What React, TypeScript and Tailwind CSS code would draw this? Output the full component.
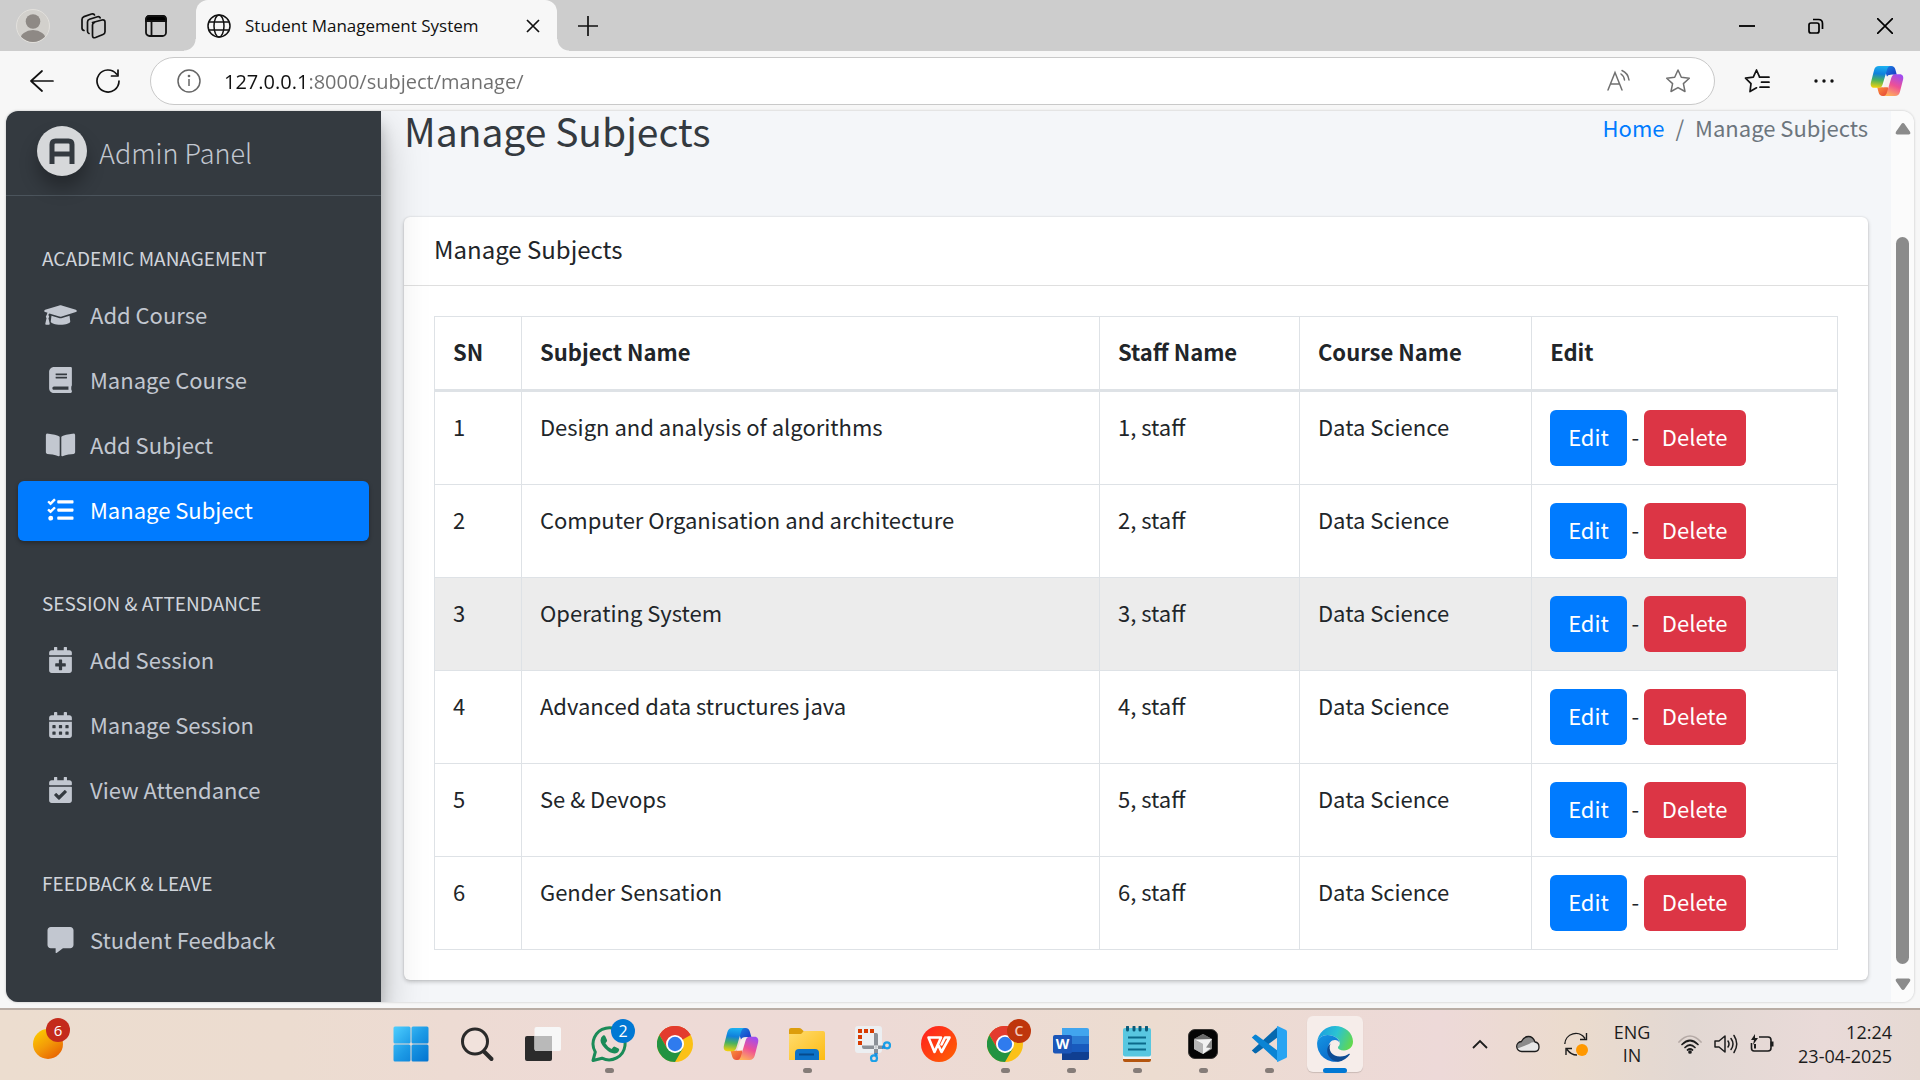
import React from "react";
import {
  FaBook,
  FaBookOpen,
  FaCalendarAlt,
  FaCalendarCheck,
  FaCalendarPlus,
  FaCommentAlt,
  FaGraduationCap,
  FaTasks,
} from "react-icons/fa";

type IconType = React.ComponentType<{ className?: string }>;

const navGroups: { title: string; items: { label: string; icon: IconType; active?: boolean }[] }[] = [
  {
    title: "ACADEMIC MANAGEMENT",
    items: [
      { label: "Add Course", icon: FaGraduationCap },
      { label: "Manage Course", icon: FaBook },
      { label: "Add Subject", icon: FaBookOpen },
      { label: "Manage Subject", icon: FaTasks, active: true },
    ],
  },
  {
    title: "SESSION & ATTENDANCE",
    items: [
      { label: "Add Session", icon: FaCalendarPlus },
      { label: "Manage Session", icon: FaCalendarAlt },
      { label: "View Attendance", icon: FaCalendarCheck },
    ],
  },
  {
    title: "FEEDBACK & LEAVE",
    items: [{ label: "Student Feedback", icon: FaCommentAlt }],
  },
];

const subjects = [
  "Design and analysis of algorithms",
  "Computer Organisation and architecture",
  "Operating System",
  "Advanced data structures java",
  "Se & Devops",
  "Gender Sensation",
];

function CopilotIcon({ id, className }: { id: string; className: string }) {
  return (
    <svg viewBox="0 0 36 34" className={className} aria-hidden="true">
      <defs>
        <linearGradient id={id + "a"} x1="0.4" y1="0" x2="0.3" y2="1">
          <stop offset="0" stopColor="#1cb0f0" />
          <stop offset="0.35" stopColor="#1080dc" />
          <stop offset="0.65" stopColor="#4cb25c" />
          <stop offset="1" stopColor="#f5d20a" />
        </linearGradient>
        <linearGradient id={id + "b"} x1="0.7" y1="0" x2="0.3" y2="1">
          <stop offset="0" stopColor="#a04cf0" />
          <stop offset="0.5" stopColor="#ee5096" />
          <stop offset="1" stopColor="#ffb25a" />
        </linearGradient>
        <linearGradient id={id + "c"} x1="0" y1="0" x2="1" y2="1">
          <stop offset="0" stopColor="#1a8ce6" />
          <stop offset="1" stopColor="#1b2fc0" />
        </linearGradient>
        <linearGradient id={id + "d"} x1="0" y1="0" x2="1" y2="1">
          <stop offset="0" stopColor="#ff9a3a" />
          <stop offset="1" stopColor="#e23a3a" />
        </linearGradient>
      </defs>
      <path d="M14 1h8.500c2.400 0 3.800 1.600 4.400 3.700l1.500 5.600h-5.200c-2.400 0-3.900.7-5 2.700z" fill={"url(#" + id + "c)"} />
      <path d="M22 33h-8.500c-2.400 0-3.800-1.600-4.400-3.700L7.600 23.700h5.200c2.400 0 3.900-.7 5-2.700z" fill={"url(#" + id + "d)"} />
      <path d="M9.500 1H22c-2.200 0-3.200 1.400-3.900 3.700l-4.600 15.500C12.700 23 11.500 24.300 9 24.300H4.500C1.200 24.300.2 21.700.9 18.600L4.300 5.200C5 2.600 6.700 1 9.500 1z" fill={"url(#" + id + "a)"} />
      <path d="M17.800 13c.8-2 2.200-2.700 4.200-2.700h3L21 21c-1 2-2 2.700-4 2.700h-3z" fill="#f7efee" />
      <path d="M26.500 33H14c2.200 0 3.200-1.400 3.900-3.700l4.600-15.500c.8-2.800 2-4.100 4.500-4.100h4.500c3.300 0 4.300 2.600 3.600 5.700l-3.400 13.400c-.7 2.600-2.400 4.200-5.200 4.200z" fill={"url(#" + id + "b)"} />
    </svg>
  );
}

function ChromeIcon() {
  return (
    <svg viewBox="0 0 36 36" className="size-9" aria-hidden="true">
      <circle cx="18" cy="18" r="18" fill="#fbc116" />
      <path d="M18 18 2.400 9A18 18 0 0 1 33.600 9z" fill="#e33b2e" />
      <path d="M18 9h15.600A18 18 0 0 0 2.400 9l7.800 13.500z" fill="#e33b2e" />
      <path d="M2.400 9A18 18 0 0 0 18 36l7.800-13.500L18 27l-7.800-4.500z" fill="#229342" />
      <circle cx="18" cy="18" r="9" fill="#fff" />
      <circle cx="18" cy="18" r="7.200" fill="#2f7bee" />
    </svg>
  );
}

function TabStrip() {
  return (
    <header className="flex h-[51px] items-center bg-[#cdcdcd] text-[#111]">
      <button aria-label="Profile" className="ml-4 flex size-[34px] shrink-0 items-center justify-center">
        <svg viewBox="0 0 34 34" className="size-[34px]">
          <defs>
            <clipPath id="avatar"><circle cx="17" cy="17" r="16" /></clipPath>
          </defs>
          <circle cx="17" cy="17" r="16.500" fill="#d2d0cc" stroke="#e2e0dc" />
          <g clipPath="url(#avatar)" fill="#8e8985">
            <circle cx="17" cy="12.500" r="7.300" />
            <ellipse cx="17" cy="31" rx="13" ry="10" />
          </g>
        </svg>
      </button>
      <button aria-label="Workspaces" className="ml-7 size-[30px] shrink-0">
        <svg viewBox="0 0 30 30" className="size-[30px]" fill="none" stroke="#111" strokeWidth="1.700" strokeLinejoin="round" strokeLinecap="round">
          <path d="M14.500 11.500 24 9q3-.6 3 2.200v9.600q0 2-2 2.700l-7.500 3q-3 1-3-2V14q0-2 2-2.600z" />
          <path d="M11 22.500q-1.500-.4-1.500-2.500v-9q0-2 2-2.700l8-2.500q2-.5 2.700 1" />
          <path d="M6 19.500q-2-.4-2-2.500V8.500Q4 6.300 6 5.600L13.500 3q2.500-.7 3 1" />
        </svg>
      </button>
      <button aria-label="Tab actions" className="ml-9 size-6 shrink-0">
        <svg viewBox="0 0 24 24" className="size-6" fill="none" stroke="#111" strokeWidth="1.800">
          <rect x="2" y="2" width="20" height="20" rx="3.500" />
          <path d="M2 7V5.500Q2 2 5.500 2h13Q22 2 22 5.500V7z" fill="#000" />
          <path d="M7.500 7v15" />
        </svg>
      </button>
      <div className="relative ml-7 flex h-full w-[361px] shrink-0 items-center rounded-t-xl bg-[#f7f7f7] pl-[11px]">
        <span className="absolute bottom-0 -left-3 size-3 bg-[radial-gradient(circle_at_0_0,transparent_11px,#f7f7f7_12px)]" />
        <span className="absolute -right-3 bottom-0 size-3 bg-[radial-gradient(circle_at_100%_0,transparent_11px,#f7f7f7_12px)]" />
        <svg viewBox="0 0 24 24" className="size-6 shrink-0" fill="none" stroke="#111" strokeWidth="1.500" aria-hidden="true">
          <circle cx="12" cy="12" r="11" />
          <ellipse cx="12" cy="12" rx="5" ry="11" />
          <path d="M2 8h20M2 16h20" />
        </svg>
        <span className="ml-[14px] flex-1 text-[17px] leading-6 whitespace-nowrap">Student Management System</span>
        <button aria-label="Close tab" className="mr-4 size-4">
          <svg viewBox="0 0 16 16" className="size-4" stroke="#111" strokeWidth="1.700"><path d="m2 2 12 12M14 2 2 14" /></svg>
        </button>
      </div>
      <button aria-label="New tab" className="ml-5 size-[22px] shrink-0">
        <svg viewBox="0 0 22 22" className="size-[22px]" stroke="#111" strokeWidth="1.700"><path d="M11 1v20M1 11h20" /></svg>
      </button>
      <div className="ml-auto flex items-center gap-[53px] pr-[27px]">
        <button aria-label="Minimize" className="size-4">
          <svg viewBox="0 0 16 16" className="size-4" stroke="#000" strokeWidth="1.800"><path d="M0 8h16" /></svg>
        </button>
        <button aria-label="Restore" className="size-4">
          <svg viewBox="0 0 16 16" className="size-4" fill="none" stroke="#000" strokeWidth="1.700">
            <rect x="1" y="5" width="10" height="10" rx="2" />
            <path d="M5 1.500h5.500Q14.500 1.500 14.500 5.500V11" />
          </svg>
        </button>
        <button aria-label="Close" className="size-4">
          <svg viewBox="0 0 16 16" className="size-4" stroke="#000" strokeWidth="1.700"><path d="m0 0 16 16M16 0 0 16" /></svg>
        </button>
      </div>
    </header>
  );
}

function Toolbar() {
  return (
    <div className="flex h-[60px] items-center bg-[#f7f7f7]">
      <button aria-label="Back" className="ml-[30px] size-6 shrink-0">
        <svg viewBox="0 0 24 24" className="size-6" fill="none" stroke="#111" strokeWidth="1.700" strokeLinecap="round" strokeLinejoin="round"><path d="M23 12H1M12 2 1 12l11 10" /></svg>
      </button>
      <button aria-label="Refresh" className="ml-[42px] size-6 shrink-0">
        <svg viewBox="0 0 24 24" className="size-6" fill="none" stroke="#111" strokeWidth="1.700" strokeLinecap="round" strokeLinejoin="round"><path d="M23 12A11 11 0 1 1 20.500 5M22 1v6h-6.500" /></svg>
      </button>
      <div className="ml-[30px] flex h-12 flex-1 items-center rounded-full border border-[#c9c9c9] bg-white pl-[26px] pr-[23px]">
        <button aria-label="Site information" className="size-6 shrink-0">
          <svg viewBox="0 0 24 24" className="size-6" fill="none" stroke="#666" strokeWidth="1.500"><circle cx="12" cy="12" r="11" /><path d="M12 10v7" /><circle cx="12" cy="7" r=".6" fill="#666" /></svg>
        </button>
        <input
          aria-label="Address"
          type="text"
          defaultValue="127.0.0.1:8000/subject/manage/"
          className="ml-[23px] h-8 flex-1 bg-[linear-gradient(90deg,#111_81px,#6f6f6f_81px)] bg-clip-text text-[20px] text-transparent outline-none"
        />
        <button aria-label="Read aloud" className="size-6">
          <svg viewBox="0 0 24 24" className="size-6" fill="none" stroke="#707070" strokeWidth="1.500" strokeLinecap="round"><path d="m1 21 7-17.500L15 21M3.500 15h9M14 5q3 2 3.500 6M15 1.500q6 2.500 7 9.500" /></svg>
        </button>
        <button aria-label="Add to favorites" className="ml-[34px] size-[26px]">
          <svg viewBox="0 0 26 26" className="size-[26px]" fill="none" stroke="#707070" strokeWidth="1.500" strokeLinejoin="round"><path d="m13 2 3.300 7.200 8 1-5.900 5.400 1.600 7.900-7-3.900-7 3.900 1.600-7.900-5.900-5.400 8-1z" /></svg>
        </button>
      </div>
      <button aria-label="Favorites" className="ml-[29px] size-[26px]">
        <svg viewBox="0 0 26 26" className="size-[26px]" fill="none" stroke="#111" strokeWidth="1.700" strokeLinejoin="round" strokeLinecap="round"><path d="M17 9.200h-1.400L12.500 2 9.300 9.200l-7.800 1L7 15.600l-1 8 6.500-3.800M15.500 9.200H25M17.500 14.200H25M16 19.200h9" /></svg>
      </button>
      <button aria-label="Settings and more" className="ml-[42px] size-6">
        <svg viewBox="0 0 24 24" className="size-6" fill="#111"><circle cx="4" cy="12" r="1.700" /><circle cx="12" cy="12" r="1.700" /><circle cx="20" cy="12" r="1.700" /></svg>
      </button>
      <button aria-label="Copilot" className="mr-4 ml-[34px]">
        <CopilotIcon id="toolbar" className="h-8 w-[34px]" />
      </button>
    </div>
  );
}

function Sidebar() {
  return (
    <aside className="z-10 w-[375px] shrink-0 bg-[#343a40] text-[#c2c7d0] shadow-[0_20px_42px_rgba(0,0,0,0.25),0_14px_14px_rgba(0,0,0,0.22)]">
      <a href="#home" className="flex h-[85px] items-center border-b border-[#4b545c] pb-1 pl-[31px]">
        <span className="flex size-[50px] items-center justify-center rounded-full bg-[#d6d8da] shadow-[0_12px_18px_rgba(0,0,0,0.3)]">
          <svg viewBox="0 0 26 26" className="size-[26px]" fill="none" stroke="#343a40" strokeWidth="5" aria-hidden="true">
            <path d="M3 26V6.500Q3 3 6.500 3h13Q23 3 23 6.500V26M3 16h20" />
          </svg>
        </span>
        <span className="ml-3 pt-1 text-[27px] leading-9 font-light">Admin Panel</span>
      </a>
      <nav className="px-3 pt-[5px]">
        {navGroups.map((group) => (
          <section key={group.title}>
            <h2 className="px-6 pt-[41px] pb-3 text-[19px] leading-8 text-[#d0d4db]">{group.title}</h2>
            <ul>
              {group.items.map(({ label, icon: Icon, active }) => (
                <li key={label} className="mb-[5px]">
                  <a
                    href="#nav"
                    className={
                      active
                        ? "flex h-[60px] items-center gap-[13px] rounded-md bg-[#007bff] pb-[3px] pl-[26px] text-[22px] text-white shadow-[0_2px_4px_rgba(0,0,0,0.3)]"
                        : "flex h-[60px] items-center gap-[13px] rounded-md pb-[3px] pl-[26px] text-[22px]"
                    }
                  >
                    <Icon className="h-[26px] w-[33px] shrink-0" />
                    <span>{label}</span>
                  </a>
                </li>
              ))}
            </ul>
          </section>
        ))}
      </nav>
    </aside>
  );
}

const th = "border border-b-[3px] border-[#dee2e6] px-[18px] pt-4 pb-5 text-left leading-9 font-bold";
const td = "border border-[#dee2e6] px-[18px] pt-4 align-top leading-9";

function SubjectsTable() {
  return (
    <table className="w-full table-fixed border-collapse text-[22px]">
      <colgroup>
        <col className="w-[6.200%]" />
        <col className="w-[41.200%]" />
        <col className="w-[14.250%]" />
        <col className="w-[16.550%]" />
        <col className="w-[21.800%]" />
      </colgroup>
      <thead>
        <tr>
          <th className={th}>SN</th>
          <th className={th}>Subject Name</th>
          <th className={th}>Staff Name</th>
          <th className={th}>Course Name</th>
          <th className={th}>Edit</th>
        </tr>
      </thead>
      <tbody>
        {subjects.map((name, i) => (
          <tr key={name} className={i === 2 ? "bg-[#ececec]" : ""}>
            <td className={td}>{i + 1}</td>
            <td className={td}>{name}</td>
            <td className={td}>{i + 1}, staff</td>
            <td className={td}>Data Science</td>
            <td className="border border-[#dee2e6] px-[18px] py-[18px] leading-9">
              <div className="flex items-center">
                <a href="#edit" className="flex h-14 items-center rounded-md bg-[#007bff] px-[18px] pb-1 text-white">Edit</a>
                <span className="w-[17px] pb-1 text-center">-</span>
                <a href="#delete" className="flex h-14 items-center rounded-md bg-[#dc3545] px-[18px] pb-1 text-white">Delete</a>
              </div>
            </td>
          </tr>
        ))}
      </tbody>
    </table>
  );
}

function PageViewport() {
  return (
    <div className="mx-[6px] flex h-[891px] overflow-hidden rounded-xl bg-[#f4f6f9] font-['Noto_Sans_CJK_SC',sans-serif] text-[#212529] shadow-[0_0_2px_1px_rgba(0,0,0,0.1)]">
      <Sidebar />
      <main className="min-w-0 flex-1 pr-[23px] pl-[23px]">
        <div className="flex h-[106px] items-start justify-between">
          <h1 className="text-[39px] leading-[38px] text-[#343a40]">Manage Subjects</h1>
          <nav aria-label="Breadcrumb" className="flex text-[22px] leading-8 text-[#6c757d]">
            <a href="#home" className="text-[#007bff]">Home</a>
            <span className="px-[11px]">/</span>
            <span>Manage Subjects</span>
          </nav>
        </div>
        <section className="rounded-md bg-white shadow-[0_0_2px_rgba(0,0,0,0.13),0_2px_4px_rgba(0,0,0,0.2)]">
          <h2 className="border-b border-[#dfdfdf] px-[30px] pt-[14px] pb-[18px] text-[24px] leading-9">Manage Subjects</h2>
          <div className="px-[30px] py-[30px]">
            <SubjectsTable />
          </div>
        </section>
      </main>
      <div className="flex w-[23px] shrink-0 flex-col items-center bg-[#fbfbfb] pt-3 pb-3" aria-hidden="true">
        <svg viewBox="0 0 16 12" className="h-3 w-4" fill="#8b8b8b"><path d="M8 0q1 0 1.600.9L15.200 9q.8 2-1.200 2.500H2Q0 11 .8 9L6.400.9Q7 0 8 0z" /></svg>
        <div className="mt-[102px] w-[13px] flex-1 rounded-full bg-[#8b8b8b]" />
        <svg viewBox="0 0 16 12" className="mt-[14px] h-3 w-4" fill="#8b8b8b"><path d="M8 12q-1 0-1.600-.9L.8 3Q0 1 2 .5h12q2 .5 1.200 2.500l-5.600 8.100Q9 12 8 12z" /></svg>
      </div>
    </div>
  );
}

const apps: { name: string; state?: "open" | "active"; badge?: string; art: React.ReactNode }[] = [
  {
    name: "Start",
    art: (
      <svg viewBox="0 0 36 36" className="size-9">
        <defs><linearGradient id="win" gradientUnits="userSpaceOnUse" x1="0" y1="0" x2="36" y2="36"><stop offset="0" stopColor="#4fd0ff" /><stop offset="0.5" stopColor="#1d9be6" /><stop offset="1" stopColor="#0272cf" /></linearGradient></defs>
        <g fill="url(#win)"><rect x=".5" y=".5" width="17" height="17" rx="1.500" /><rect x="18.500" y=".5" width="17" height="17" rx="1.500" /><rect x=".5" y="18.500" width="17" height="17" rx="1.500" /><rect x="18.500" y="18.500" width="17" height="17" rx="1.500" /></g>
      </svg>
    ),
  },
  {
    name: "Search",
    art: (
      <svg viewBox="0 0 36 36" className="size-9" fill="none" stroke="#2a2a2a" strokeLinecap="round"><circle cx="16" cy="15.500" r="12.500" strokeWidth="3" fill="#f1e2dc" /><path d="m25.500 26 7 7" strokeWidth="4" /></svg>
    ),
  },
  {
    name: "Task view",
    art: (
      <svg viewBox="0 0 36 36" className="size-9"><rect x="0" y="10" width="27" height="25" rx="2" fill="#2b2b2b" /><rect x="9.500" y="1" width="26.500" height="24" rx="2" fill="#f7f7f7" /><path d="M9.500 10H27v15H11.500q-2 0-2-2z" fill="#b9b9b9" /></svg>
    ),
  },
  {
    name: "WhatsApp",
    state: "open",
    badge: "2",
    art: (
      <svg viewBox="0 0 36 36" className="size-9"><path d="M2 34.500 4.300 26A16 16 0 1 1 11 32.200z" fill="none" stroke="#1a8b58" strokeWidth="3" strokeLinejoin="round" /><path d="M12 9.500q1.700-.5 2.300.7l1.700 3.700q.4 1-.4 1.900l-1.200 1.500q2.200 4 6.200 5.700l1.700-2q.7-.8 1.600-.3l3.600 1.800q1 .5.600 1.800-1.200 3.300-4.700 3.300-4.500-.2-9.300-5-4.500-4.700-4.600-8.400.1-3.200 2.500-4.700z" fill="#1a8b58" /></svg>
    ),
  },
  { name: "Chrome", art: <ChromeIcon /> },
  { name: "Copilot", art: <CopilotIcon id="task" className="h-[34px] w-9" /> },
  {
    name: "File Explorer",
    state: "open",
    art: (
      <svg viewBox="0 0 36 36" className="size-9"><defs><linearGradient id="fold" x1="0" y1="0" x2="1" y2="1"><stop offset="0" stopColor="#ffdc70" /><stop offset="1" stopColor="#fdbb12" /></linearGradient></defs><path d="M0 4q0-2 2-2h8q1.500 0 2.500 1L15 5.500V9H0z" fill="#dd9d0c" /><path d="M0 8h12l3-3h19q2 0 2 2v27H0z" fill="url(#fold)" /><path d="M6 34v-7q0-4 4-4h16q4 0 4 4v7z" fill="#0c72c8" /><path d="M10 28.500h15" stroke="#064a8c" strokeWidth="2" /></svg>
    ),
  },
  {
    name: "Snipping Tool",
    art: (
      <svg viewBox="0 0 36 36" className="size-9">
        <rect width="27" height="27" rx="3" fill="#eceff2" />
        <path d="M3 3h4v4H3zM9 3h4v4H9zM15 3h4v4h-4zM3 9h4v4H3zM3 15h4v4H3z" fill="#d83b01" />
        <path d="M7 19.500V21q0 2 2 2h19v-3.500zM19 7h2.500q1.500 0 1.500 2v19h-4z" fill="#8b9198" />
        <circle cx="21" cy="21.200" r="1.500" fill="#c8ccd0" />
        <circle cx="32" cy="19.300" r="3" fill="none" stroke="#1aa0e8" strokeWidth="2.200" />
        <circle cx="19" cy="32.300" r="3" fill="none" stroke="#1aa0e8" strokeWidth="2.200" />
        <path d="M27 21.200h3M21 27v3" stroke="#1a8fe0" strokeWidth="3" />
      </svg>
    ),
  },
  {
    name: "WPS Office",
    art: (
      <svg viewBox="0 0 36 36" className="size-9"><defs><linearGradient id="wps" x1="0" y1="0" x2="1" y2="1"><stop offset="0" stopColor="#ff1d22" /><stop offset="1" stopColor="#ff6300" /></linearGradient></defs><circle cx="18" cy="18" r="18" fill="url(#wps)" /><path d="M7.500 11.500h12.500l-6.500 14.500zM17 18.500l3.500 7.500 8-14.500h-4.500l-3.500 7" fill="none" stroke="#fff" strokeWidth="2.600" strokeLinejoin="round" strokeLinecap="round" /></svg>
    ),
  },
  { name: "Chrome profile", state: "open", badge: "C", art: <ChromeIcon /> },
  {
    name: "Word",
    state: "open",
    art: (
      <svg viewBox="0 0 36 36" className="size-9"><path d="M9 2h25q2 0 2 2v6H9z" fill="#41a5ee" /><path d="M9 10h27v8.500H9z" fill="#2b7cd3" /><path d="M9 18h27v8.500H9z" fill="#185abd" /><path d="M9 26h27v6q0 2-2 2H9z" fill="#103f91" /><rect y="9" width="19" height="18.500" rx="2" fill="#1b56b8" /><text x="9.500" y="23" fontSize="14" fontWeight="700" fontFamily="Open Sans" textAnchor="middle" fill="#fff">W</text></svg>
    ),
  },
  {
    name: "Notepad",
    state: "open",
    art: (
      <svg viewBox="0 0 36 36" className="size-9"><path d="M4 32h28v2q0 2-2 2H6q-2 0-2-2z" fill="#b5560f" /><rect x="4" y="20" width="28" height="13" fill="#f4f4f4" /><rect x="4" y="2" width="28" height="28.500" rx="2" fill="#58c7e0" /><path d="M9 11.500h18M9 17.500h18M9 23.500h18" stroke="#0b6a8a" strokeWidth="2" /><path d="M8.500 1v3M15 1v3M21 1v3M27.500 1v3" stroke="#0b5a78" strokeWidth="3" strokeLinecap="round" /></svg>
    ),
  },
  {
    name: "Cursor",
    state: "open",
    art: (
      <svg viewBox="0 0 36 36" className="size-9">
        <rect x="3.500" y="3.500" width="29" height="29" rx="6.500" fill="#050505" stroke="#3a3735" />
        <path d="m18 8 9 5v10l-9 5-9-5V13z" fill="#8a8a8a" />
        <path d="m9 13 9-5 9 5-9 2z" fill="#6a6a6a" />
        <path d="M9 13.500 18 18v10l-9-5z" fill="#b5b5b5" />
        <path d="M9.500 13.500 27 13l-6 8.500 5 .5-8 6V18z" fill="#f2f2f2" />
      </svg>
    ),
  },
  {
    name: "Visual Studio Code",
    state: "open",
    art: (
      <svg viewBox="0 0 36 36" className="size-9"><path d="m.8 24.500 2.700 2.500q1 .8 2 0L27 11V.5z" fill="#0668ae" /><path d="M.8 11.500 3.500 9q1-.8 2 0L27 25v10.500z" fill="#0a84d4" /><path d="M26.500 0 35 4q1 .5 1 1.500v25q0 1-1 1.500l-8.500 4q-.5-.2-.5-1V1q0-.8.5-1z" fill="#28a4f2" /></svg>
    ),
  },
  {
    name: "Microsoft Edge",
    state: "active",
    art: (
      <svg viewBox="0 0 36 36" className="size-9">
        <defs>
          <linearGradient id="edgeTop" x1="0" y1="0.3" x2="1" y2="0.6"><stop offset="0" stopColor="#1b9de2" /><stop offset="0.5" stopColor="#2bc3d2" /><stop offset="1" stopColor="#62d84e" /></linearGradient>
          <linearGradient id="edgeLow" x1="0" y1="0" x2="0.6" y2="1"><stop offset="0" stopColor="#1596e4" /><stop offset="1" stopColor="#0a68c8" /></linearGradient>
        </defs>
        <path d="M.2 16A18 18 0 0 1 18 0c10 0 18 7 18 15.500 0 5.500-4 9-9 9-4 0-6-1.400-6-3 0-1.200 1.800-1.500 1.800-4.500C22.800 13 17 9 10.500 9 5 9 1.500 12 .2 16z" fill="url(#edgeTop)" />
        <path d="M.2 16C1.500 12 5 9 10.500 9c6.500 0 12 4 12 8-.5-2-2.500-3-4.500-3-4 0-6.500 3.500-6.500 8 0 6.500 5 12 12 13A18 18 0 0 1 .2 16z" fill="url(#edgeLow)" />
        <path d="M13.500 17.500c-3 7 2 13 9.500 13 4 0 7-1.300 9-2.700q1-.5.800.6A18 18 0 0 1 21 35.700C14 35 9.500 29 10.300 23q.7-3.700 3.200-5.500z" fill="#0d4b94" />
      </svg>
    ),
  },
];

function Taskbar() {
  return (
    <footer className="flex h-[72px] items-center border-t-2 border-[#b9ada5] bg-[linear-gradient(90deg,#ecddcf_0%,#ecdcd0_15%,#eedad6_32%,#eddad6_45%,#ecdcd0_60%,#edd9d8_75%,#ebdbcd_82%,#e2d8d3_88%,#e9dad8_95%,#e6d9d3_100%)] pb-0.5 font-['Open_Sans',sans-serif] text-[#1c1c1c]">
      <button aria-label="Widgets" className="relative ml-[33px] size-[30px] shrink-0 rounded-full bg-[linear-gradient(145deg,#fcc800_10%,#f39a08_50%,#e65a00_95%)]">
        <span className="absolute -top-[11px] left-[13px] flex size-6 items-center justify-center rounded-full bg-[#c42b1c] text-[15px] leading-none text-white">6</span>
      </button>
      <div className="ml-80 flex gap-[10px]">
        {apps.map((app) => (
          <button
            key={app.name}
            aria-label={app.name}
            className={
              app.state === "active"
                ? "relative flex size-14 items-center justify-center rounded-md bg-[#f6edea] shadow-[0_1px_1px_rgba(0,0,0,0.15)]"
                : "relative flex size-14 items-center justify-center rounded-md"
            }
          >
            {app.art}
            {app.badge === "2" && (
              <span className="absolute top-[3px] right-0.5 flex size-6 items-center justify-center rounded-full bg-[#0078d4] text-[16px] leading-none text-white">2</span>
            )}
            {app.badge === "C" && (
              <span className="absolute top-[3px] right-0.5 flex size-6 items-center justify-center rounded-full bg-[#bf360c] text-[14px] leading-none font-semibold text-[#f3c9bb]">C</span>
            )}
            {app.state === "open" && <span className="absolute -bottom-px h-[5px] w-[9px] rounded-full bg-[#857c78]" />}
            {app.state === "active" && <span className="absolute -bottom-px h-[5px] w-6 rounded-full bg-[#0078d4]" />}
          </button>
        ))}
      </div>
      <div className="ml-auto flex items-center pr-7">
        <button aria-label="Show hidden icons" className="size-4">
          <svg viewBox="0 0 16 16" className="size-4" fill="none" stroke="#1c1c1c" strokeWidth="1.800"><path d="m1 12 7-7 7 7" /></svg>
        </button>
        <button aria-label="OneDrive" className="ml-7 w-6">
          <svg viewBox="0 0 24 18" className="h-[18px] w-6"><path d="M6 16.500a5 5 0 0 1-.6-10Q8 1.500 12.500 1.500T19 7q4 .6 4 4.900t-4 4.600z" fill="#e8e8e8" /><path d="M1.500 13.500Q0 7.500 5.400 6.500 8 1.500 12.500 1.500T19 7q-4 0-6 2z" fill="#8b8b8b" /><path d="M6 16.500a5 5 0 0 1-.6-10Q8 1.500 12.500 1.500T19 7q4 .6 4 4.900t-4 4.600z" fill="none" stroke="#1c1c1c" strokeWidth="1.300" /></svg>
        </button>
        <button aria-label="Updates" className="ml-6 size-6">
          <svg viewBox="0 0 24 24" className="size-6" fill="none" stroke="#1c1c1c" strokeWidth="1.400"><path d="M.8 12A11 11 0 0 1 21 6.500M22.500 1v6.500H16M2 23v-6.500h6M3 17.500Q7 23 13 23" /><circle cx="18" cy="18" r="6" fill="#ff9800" stroke="none" /></svg>
        </button>
        <button className="ml-6 w-10 text-center text-[18px] leading-[23px]">ENG<br />IN</button>
        <button aria-label="Network, volume and battery" className="ml-[26px] flex items-center gap-3">
          <svg viewBox="0 0 24 20" className="h-5 w-6" fill="none" stroke="#1c1c1c" strokeWidth="1.700" strokeLinecap="round"><path d="M1 8q11-12 22 0" stroke="#b5aaa6" /><path d="M4 10.500q8-8 16 0M7 13.500q5-5 10 0M9.500 16q2.500-2 5 0" /><circle cx="12" cy="18" r="1" fill="#1c1c1c" /></svg>
          <svg viewBox="0 0 24 20" className="h-5 w-6" fill="none" stroke="#1c1c1c" strokeWidth="1.500" strokeLinecap="round" strokeLinejoin="round"><path d="M1 7h4l6-5v16l-6-5H1zM14 7q2 3 0 6M17 4.500q4 5.500 0 11M20 1.500q5.500 8.500 0 17" /></svg>
          <svg viewBox="0 0 24 20" className="h-5 w-6" fill="none" stroke="#1c1c1c" strokeWidth="1.600"><path d="M9 3h9q3 0 3 3v8q0 3-3 3H4q-2.500 0-2.500-3V9" /><path d="M22 7.500v5" strokeWidth="3" /><path d="M5 0 1 6h3L3 11l5-7H5z" fill="#1c1c1c" stroke="none" /><path d="M5 10v4.500" strokeWidth="2" /></svg>
        </button>
        <button className="ml-[18px] w-[100px] text-right text-[18px] leading-6 whitespace-nowrap">12:24<br />23-04-2025</button>
      </div>
    </footer>
  );
}

export default function App() {
  return (
    <div className="min-h-screen overflow-hidden bg-[#f7f7f7] font-['Open_Sans',sans-serif]">
      <TabStrip />
      <Toolbar />
      <PageViewport />
      <div className="h-[6px]" />
      <Taskbar />
    </div>
  );
}
